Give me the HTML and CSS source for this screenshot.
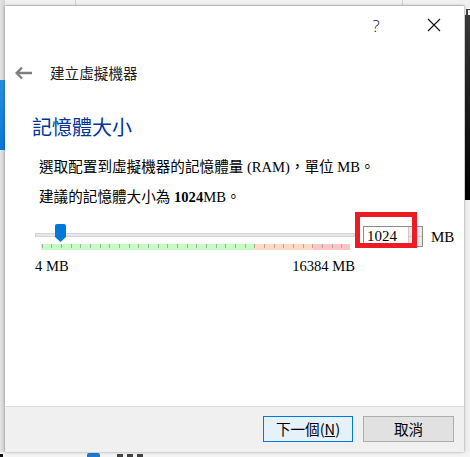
FILE: index.html
```html
<!DOCTYPE html>
<html lang="zh-Hant">
<head>
<meta charset="utf-8">
<title>建立虛擬機器</title>
<link rel="stylesheet" href="styles.css">
</head>
<body>
<div class="desk">
  <div class="bg-top"><span class="vline v1"></span><span class="vline v2"></span></div>
  <div class="bg-left"><span class="blue"></span></div>
  <div class="bg-right"><span class="glyph"></span><span class="dark"></span></div>
  <div class="bg-bottom"><span class="dot"></span><span class="ico"></span><span class="blk b1"></span><span class="blk b2"></span><span class="blk b3"></span></div>

  <div class="dialog">
    <div class="titlebar">
      <span class="tbtn help">?</span>
      <span class="tbtn close"><svg width="14" height="14" viewBox="0 0 14 14"><path d="M1 1L13 13M13 1L1 13" stroke="#111" stroke-width="1.1" fill="none"/></svg></span>
    </div>
    <div class="nav">
      <svg class="back" width="18" height="14" viewBox="0 0 18 14"><path d="M7 1.5L1.6 7L7 12.5M1.8 7H17" stroke="#7f7f7f" stroke-width="2.4" fill="none"/></svg>
      <span class="navtitle">建立虛擬機器</span>
    </div>
    <div class="content">
      <h1 class="heading">記憶體大小</h1>
      <p class="line line1">選取配置到虛擬機器的記憶體量 (RAM)，單位 MB。</p>
      <p class="line line2">建議的記憶體大小為 <b>1024</b>MB。</p>
      <div class="ramrow">
        <div class="slider">
          <div class="track"></div>
          <svg class="handle" width="11" height="18" viewBox="0 0 11 18"><path d="M0 2Q0 0 2 0H9Q11 0 11 2V13L5.5 18L0 13Z" fill="#0078d7"/></svg>
          <div class="scale"><span class="seg g"></span><span class="seg o"></span><span class="seg r"></span></div>
          <div class="labels"><span>4 MB</span><span>16384 MB</span></div>
        </div>
        <div class="spin">
          <span class="spinval">1024</span>
          <span class="spinbtns"><span class="sb up"></span><span class="sb down"></span></span>
        </div>
        <span class="unit">MB</span>
      </div>
    </div>
    <div class="footer">
      <button class="btn primary">下一個(<u>N</u>)</button>
      <button class="btn">取消</button>
    </div>
    <div class="highlight"></div>
  </div>
</div>
</body>
</html>
```

FILE: styles.css
```css
html, body { margin: 0; padding: 0; }
body { width: 470px; height: 457px; overflow: hidden; background: #e9e9e9; }
.desk { position: relative; width: 470px; height: 457px; overflow: hidden; background: #ececec; }

.bg-top { position: absolute; left: 0; top: 0; width: 470px; height: 6px; background: #f0f0f0; border-bottom: 1px solid #d6d6d6; box-sizing: border-box; }
.vline { position: absolute; top: 0; width: 1px; height: 6px; background: #cfcfcf; }
.v1 { left: 75px; }
.v2 { left: 402px; }
.bg-left { position: absolute; left: 0; top: 0; width: 5px; height: 457px; background: linear-gradient(to right, #e4e4e4, #d4d4d4); }
.bg-left .blue { position: absolute; left: 0; top: 80px; width: 5px; height: 70px; background: linear-gradient(#2a8de0, #0b78d8); }
.bg-right { position: absolute; left: 465px; top: 0; width: 5px; height: 457px; background: #f0f0f0; }
.bg-right .glyph { position: absolute; left: 1px; top: 9px; width: 4px; height: 8px; border-left: 2px solid #444; border-top: 1px solid #444; box-sizing: border-box; }
.bg-right .dark { position: absolute; left: 0; top: 15px; width: 5px; height: 185px; background: linear-gradient(#3a3a3a, #101010 70%, #000); }
.bg-bottom { position: absolute; left: 0; top: 452px; width: 470px; height: 5px; background: #f4f4f4; }
.bg-bottom .dot { position: absolute; left: 0; top: 2px; width: 3px; height: 3px; background: #111; }
.bg-bottom .ico { position: absolute; left: 87px; top: 1px; width: 13px; height: 4px; background: #1e78d0; border-radius: 2px 2px 0 0; }
.bg-bottom .blk { position: absolute; top: 2px; width: 6px; height: 3px; background: #444; }
.b1 { left: 117px; }
.b2 { left: 127px; }
.b3 { left: 137px; }

.dialog {
  position: absolute; left: 5px; top: 6px; width: 459px; height: 446px;
  background: #fff; box-shadow: 0 0 3px rgba(0,0,0,0.35);
  display: flex; flex-direction: column;
  font-family: "Liberation Serif", "Noto Sans CJK TC", serif; color: #000;
}

.titlebar { height: 38px; display: flex; justify-content: flex-end; align-items: center; gap: 12px; padding-right: 7px; }
.tbtn { width: 46px; height: 30px; display: flex; align-items: center; justify-content: center; }
.help { font: 300 17px "Open Sans", "Noto Sans", sans-serif; color: #111; }

.nav { margin-top: 17px; height: 24px; display: flex; align-items: center; }
.back { margin-left: 10px; }
.navtitle { margin-left: 17px; font: 14.6px/24px "Noto Sans CJK TC", sans-serif; color: #1a1a1a; }

.content { flex: 1; padding-left: 27px; }
.heading { margin: 28px 0 0; font: 400 20px/28px "Noto Sans CJK TC", sans-serif; color: #003399; }
.line { margin: 0 0 0 7px; font-size: 14.6px; line-height: 20px; }
.line1 { margin-top: 16px; }
.line2 { margin-top: 10px; }
.line2 b { font-weight: 700; }

.ramrow { margin: 19px 0 0 3px; display: flex; align-items: flex-start; }
.slider { position: relative; width: 320px; }
.track { margin-top: 7px; height: 4px; background: #e6e6e6; border: 1px solid #d4d4d4; box-sizing: border-box; }
.handle { position: absolute; left: 20px; top: -2px; }
.scale {
  margin: 7px 0 0 6px; width: 309px; height: 6px; display: flex; position: relative;
}
.scale::after {
  content: ""; position: absolute; left: 0; top: 0; width: 100%; height: 4px;
  background: repeating-linear-gradient(to right, transparent 0, transparent 0.7px, #a8a8a8 0.7px, #a8a8a8 1.7px, transparent 1.7px, transparent 9.67px);
}
.seg { display: block; height: 6px; }
.g { width: 212px; background: #c4fcc4; }
.o { width: 60px; background: #ffd9c4; }
.r { width: 37px; background: #ffc4c4; }
.labels { margin-top: 7px; display: flex; justify-content: space-between; font-size: 14.6px; line-height: 18px; }

.spin { margin-left: 8px; width: 60px; height: 21px; box-sizing: border-box; border: 1px solid #8c8c8c; display: flex; align-items: center; background: #fff; }
.spinval { flex: 1; padding-left: 3px; font-size: 15px; line-height: 19px; }
.spinbtns { width: 13px; height: 19px; display: flex; flex-direction: column; border-left: 1px solid #c8c8c8; }
.sb { flex: 1; background: #e8e8e8; position: relative; border-bottom: 1px solid #d0d0d0; }
.sb.down { border-bottom: none; }
.sb::after { content: ""; position: absolute; left: 5px; width: 2px; height: 2px; background: #555; }
.up::after { top: 4px; }
.down::after { top: 2px; }
.unit { margin-left: 8px; font-size: 15px; line-height: 23px; }

.footer { height: 46px; box-sizing: border-box; background: #f0f0f0; border-top: 1px solid #dfdfdf; display: flex; justify-content: flex-end; align-items: flex-start; padding: 9px 10px 0 0; gap: 10px; }
.btn { height: 26px; width: 91px; box-sizing: border-box; border: 1px solid #adadad; background: #e1e1e1; font: 14.6px/22px "Noto Sans CJK TC", sans-serif; color: #000; padding: 0; }
.btn.primary { width: 90px; border-color: #0078d7; background: #e5f1fb; }
.btn u { text-underline-offset: 1px; }

.highlight { position: absolute; left: 350px; top: 206px; width: 62px; height: 36px; box-sizing: border-box; border: 5px solid #ed1c24; }
```
